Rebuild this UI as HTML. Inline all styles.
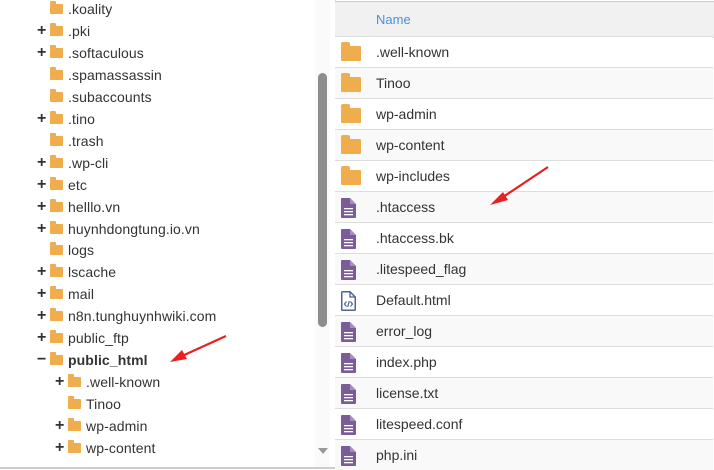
<!DOCTYPE html>
<html><head><style>
body{margin:0;width:714px;height:470px;overflow:hidden;background:#fff;position:relative;font-family:"Liberation Sans",sans-serif}
.t{position:absolute;font-size:14px;color:#333;line-height:22px;height:22px;white-space:nowrap}
.f{display:inline-block;position:absolute;top:6px;width:13px;height:11px}
.f:before{content:"";position:absolute;left:0;top:-2px;width:6px;height:3px;background:#f0ad4e;border-radius:1px 1px 0 0}
.f:after{content:"";position:absolute;left:0;top:1px;width:13px;height:10px;background:#f0ad4e;border-radius:1px}
.p{position:absolute;top:1px;font-weight:bold;font-size:16px;color:#333}
.r{position:absolute;left:335px;width:378px;height:30px;border-top:1px solid #ddd;font-size:14px;color:#333}
.r span{position:absolute;left:41px;top:7px}
.rf{position:absolute;left:6px;top:8px;width:20px;height:15px}
.rf:before{content:"";position:absolute;left:0;top:-3px;width:9px;height:4px;background:#f0ad4e;border-radius:2px 2px 0 0}
.rf:after{content:"";position:absolute;left:0;top:1px;width:20px;height:15px;background:#f0ad4e;border-radius:1px}
</style></head><body>
<div style="position:absolute;left:315px;top:0;width:15px;height:467px;background:#fafafa"></div>
<div style="position:absolute;left:318px;top:73px;width:9px;height:254px;background:#8d8d8d;border-radius:5px"></div>
<div style="position:absolute;left:318px;top:448px;width:0;height:0;border-left:5px solid transparent;border-right:5px solid transparent;border-top:6px solid #999"></div>
<div style="position:absolute;left:0;top:467px;width:335px;height:2px;background:#ccc"></div>
<div style="position:absolute;left:335px;top:0;width:1px;height:470px;background:#ddd"></div>
<div style="position:absolute;left:335px;top:1px;width:379px;height:35px;background:#f1f1f1;border-top:1px solid #ccc;border-bottom:1px solid #ccc"></div>
<div style="position:absolute;left:376px;top:12px;font-size:13px;color:#4a90d9">Name</div>
<div id="tree"></div>
<div id="files"></div>
<script>
var tr=[[".koality",0,0],[".pki",0,1],[".softaculous",0,1],[".spamassassin",0,0],[".subaccounts",0,0],[".tino",0,1],[".trash",0,0],[".wp-cli",0,1],["etc",0,1],["helllo.vn",0,1],["huynhdongtung.io.vn",0,1],["logs",0,0],["lscache",0,1],["mail",0,1],["n8n.tunghuynhwiki.com",0,1],["public_ftp",0,1],["public_html",0,2],[".well-known",1,1],["Tinoo",1,0],["wp-admin",1,1],["wp-content",1,1]];
var h="";tr.forEach(function(e,i){var y=Math.round(-3+i*21.95);var o=e[1]?18:0;
h+='<div class="t" style="top:'+y+'px;left:0;width:315px">';
if(e[2]==1)h+='<span class="p" style="left:'+(37+o)+'px">+</span>';
if(e[2]==2)h+='<span class="p" style="left:'+(37+o)+'px">−</span>';
h+='<span class="f" style="left:'+(50+o)+'px"></span><span style="position:absolute;left:'+(68+o)+'px;top:1px;letter-spacing:0.1px;'+(e[2]==2?'font-weight:bold':'')+'">'+e[0]+'</span></div>';});
document.getElementById("tree").innerHTML=h;
var fl=[[".well-known",0],["Tinoo",0],["wp-admin",0],["wp-content",0],["wp-includes",0],[".htaccess",1],[".htaccess.bk",1],[".litespeed_flag",1],["Default.html",2],["error_log",1],["index.php",1],["license.txt",1],["litespeed.conf",1],["php.ini",1]];
var d="";fl.forEach(function(e,i){var y=36+i*31;
d+='<div class="r" style="top:'+y+'px;background:'+(i%2?'#f9f9f9':'#fff')+'">';
if(e[1]==0)d+='<div class="rf"></div>';
else if(e[1]==1)d+='<svg style="position:absolute;left:6px;top:6px" width="15" height="20" viewBox="0 0 15 20"><path d="M1 0H9L15 6V19Q15 20 14 20H1Q0 20 0 19V1Q0 0 1 0Z" fill="#7b5c99"/><path d="M9 0V6H15" fill="#a58fbf"/><rect x="3" y="10" width="9" height="1.3" fill="#fff"/><rect x="3" y="13" width="9" height="1.3" fill="#fff"/><rect x="3" y="16" width="9" height="1.3" fill="#fff"/></svg>';
else d+='<svg style="position:absolute;left:6px;top:6px" width="15" height="20" viewBox="0 0 15 20"><path d="M1.5 .75H9L14.25 6V18.5Q14.25 19.25 13.5 19.25H1.5Q.75 19.25 .75 18.5V1.5Q.75 .75 1.5 .75Z" fill="#fff" stroke="#4d6590" stroke-width="1.5"/><path d="M9 1V6H14" fill="none" stroke="#4d6590" stroke-width="1.3"/><path d="M5.5 10.5L3.5 13L5.5 15.5M9.5 10.5L11.5 13L9.5 15.5M8.3 10L6.7 16" fill="none" stroke="#4d6590" stroke-width="1.2"/></svg>';
d+='<span>'+e[0]+'</span></div>';});
document.getElementById("files").innerHTML=d;
</script>
<svg style="position:absolute;left:0;top:0" width="714" height="470">
<path d="M548 167L500 199" stroke="#e8201f" stroke-width="2.2"/><path d="M490 205L503 192L508 200Z" fill="#e8201f"/>
<path d="M226 336L182 356" stroke="#e8201f" stroke-width="2.2"/><path d="M170 362L182 350L187 359Z" fill="#e8201f"/>
</svg>
</body></html>
